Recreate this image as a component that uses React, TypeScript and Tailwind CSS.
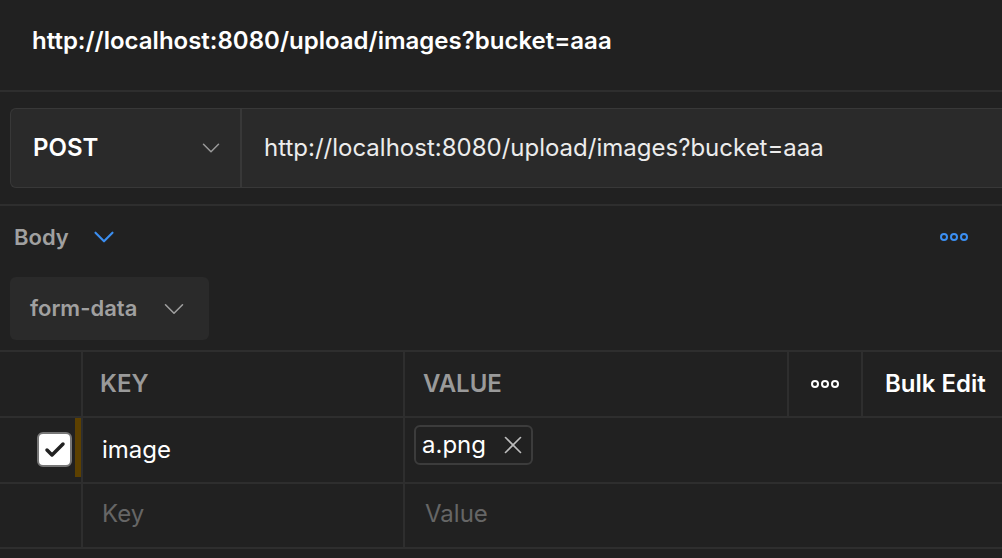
import { Check, ChevronDown, X } from 'lucide-react';

function Dots({ className }: { className: string }) {
  return (
    <svg width="28" height="8" viewBox="0 0 28 8" className={className} fill="none" stroke="currentColor">
      <circle cx="4" cy="4" r="3" strokeWidth="2" />
      <circle cx="14" cy="4" r="3" strokeWidth="2" />
      <circle cx="24" cy="4" r="3" strokeWidth="2" />
    </svg>
  );
}

export default function App() {
  return (
    <div className="w-[1002px] h-[558px] overflow-hidden bg-[#212121] text-white" style={{ fontFamily: 'Inter, "Noto Sans", sans-serif' }}>
      <div className="h-[92px] flex items-center px-8 border-b-2 border-[#2e2e2e]">
        <h1 className="text-[24px] font-semibold pb-[8px]">http://localhost:8080/upload/images?bucket=aaa</h1>
      </div>

      <div className="pt-4 pb-[16px] pl-[10px] border-b-2 border-[#2e2e2e]">
        <div className="h-[80px] flex bg-[#2a2a2a] border border-[#383838] border-r-0 rounded-l-md">
          <div className="w-[231px] flex items-center justify-between pl-[22px] pr-[14px] border-r-2 border-[#383838]">
            <span className="text-[24px] font-semibold">POST</span>
            <ChevronDown size={30} strokeWidth={1.2} className="text-[#9a9a9a]" />
          </div>
          <div className="flex items-center pl-[22px] text-[24px] text-[#ececec]">
            http://localhost:8080/upload/images?bucket=aaa
          </div>
        </div>
      </div>

      <div className="h-[62px] flex items-center justify-between pl-[14px] pr-[34px]">
        <div className="flex items-center gap-[18px]">
          <span className="text-[22px] font-semibold text-[#a0a0a0]">Body</span>
          <ChevronDown size={34} strokeWidth={1.5} className="text-[#3b8ef0]" />
        </div>
        <Dots className="text-[#3b8ef0]" />
      </div>

      <div className="pl-[10px] pt-[9px] pb-[10px]">
        <div className="w-[199px] h-[63px] flex items-center justify-between pl-[20px] pr-[18px] bg-[#2a2a2a] rounded-md">
          <span className="text-[22px] font-semibold text-[#a0a0a0]">form-data</span>
          <ChevronDown size={34} strokeWidth={1.1} className="text-[#a0a0a0]" />
        </div>
      </div>

      <div className="border-t-2 border-[#2e2e2e]">
        <div className="h-[66px] flex border-b-2 border-[#2e2e2e]">
          <div className="w-[83px] border-r-2 border-[#2e2e2e]" />
          <div className="w-[322px] flex items-center pl-[17px] border-r-2 border-[#2e2e2e] text-[24px] font-semibold text-[#9a9a9a]">KEY</div>
          <div className="w-[384px] flex items-center pl-[18px] border-r-2 border-[#2e2e2e] text-[24px] font-semibold text-[#9a9a9a]">VALUE</div>
          <div className="w-[74px] flex items-center justify-center border-r-2 border-[#2e2e2e]">
            <Dots className="text-white" />
          </div>
          <div className="flex-1 flex items-center pl-[22px] text-[24px] font-semibold">Bulk Edit</div>
        </div>

        <div className="h-[66px] flex border-b-2 border-[#2e2e2e]">
          <div className="w-[83px] flex items-start justify-end border-r-2 border-[#2e2e2e]">
            <div className="w-[35px] h-[35px] mt-[14px] bg-white rounded-md border-2 border-[#777] flex items-center justify-center">
              <Check size={24} strokeWidth={3.5} className="text-[#222]" />
            </div>
            <div className="w-[6px] h-[59px] bg-[#5c4000] ml-[3px]" />
          </div>
          <div className="w-[322px] flex items-center pl-[19px] border-r-2 border-[#2e2e2e] text-[24px]">image</div>
          <div className="flex-1 flex items-start pl-[9px] pt-[7px]">
            <div className="h-[40px] flex items-center gap-[12px] pl-[6px] pr-[3px] border-2 border-[#3c3c3c] rounded-md text-[24px]">
              <span>a.png</span>
              <X size={30} strokeWidth={1.3} className="text-[#bdbdbd]" />
            </div>
          </div>
        </div>

        <div className="h-[65px] flex border-b-2 border-[#2e2e2e]">
          <div className="w-[83px] border-r-2 border-[#2e2e2e]" />
          <div className="w-[322px] flex items-center pl-[19px] pb-[3px] border-r-2 border-[#2e2e2e] text-[24px] text-[#666]">Key</div>
          <div className="flex-1 flex items-center pl-[20px] pb-[3px] text-[24px] text-[#666]">Value</div>
        </div>
      </div>
    </div>
  );
}
